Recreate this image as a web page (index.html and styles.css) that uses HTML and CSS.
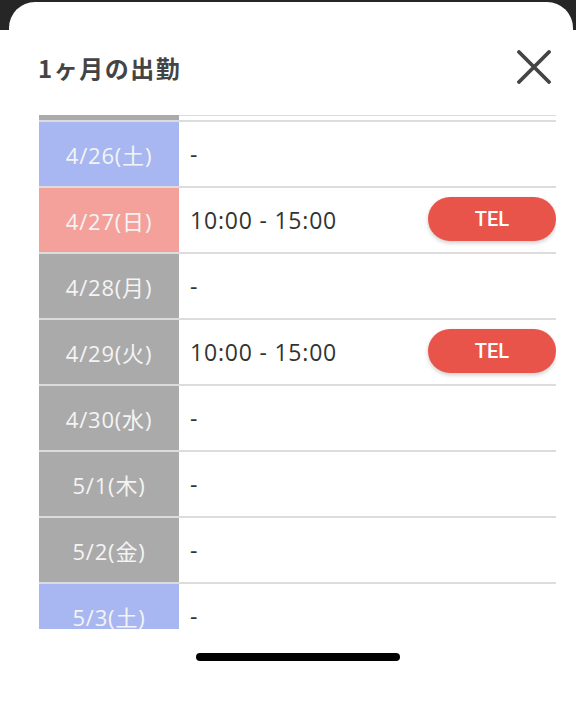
FILE: index.html
```html
<!DOCTYPE html>
<html lang="ja">
<head>
<meta charset="utf-8">
<link rel="stylesheet" href="styles.css">
</head>
<body>
<div class="sheet">
  <div class="header">
    <h1 class="title">1ヶ月の出勤</h1>
    <button class="close" aria-label="閉じる">
      <svg viewBox="0 0 34 34" width="34" height="34"><path d="M2 2 L32 32 M32 2 L2 32" stroke="#444" stroke-width="3.8" stroke-linecap="round" fill="none"/></svg>
    </button>
  </div>
  <div class="list">
    <div class="row partial"><div class="day gray"></div><div class="info top"></div></div>
    <div class="row"><div class="day sat">4/26(土)</div><div class="info">-</div></div>
    <div class="row"><div class="day sun">4/27(日)</div><div class="info">10:00 - 15:00<span class="tel">TEL</span></div></div>
    <div class="row"><div class="day gray">4/28(月)</div><div class="info">-</div></div>
    <div class="row"><div class="day gray">4/29(火)</div><div class="info">10:00 - 15:00<span class="tel">TEL</span></div></div>
    <div class="row"><div class="day gray">4/30(水)</div><div class="info">-</div></div>
    <div class="row"><div class="day gray">5/1(木)</div><div class="info">-</div></div>
    <div class="row"><div class="day gray">5/2(金)</div><div class="info">-</div></div>
    <div class="row"><div class="day sat">5/3(土)</div><div class="info">-</div></div>
  </div>
  <div class="home-area"><div class="home-bar"></div></div>
</div>
</body>
</html>
```
FILE: styles.css
```css
* { box-sizing: border-box; }
html, body { margin: 0; padding: 0; }
body {
  width: 576px;
  height: 705px;
  overflow: hidden;
  background: linear-gradient(#262626 0 30px, #ffffff 30px);
  font-family: "Noto Sans CJK JP", "Noto Sans", sans-serif;
}
.sheet {
  margin: 2px 3px 0 9px;
  height: 703px;
  background: #fff;
  border-radius: 26px 26px 0 0;
  display: flex;
  flex-direction: column;
}
.header {
  margin-top: 33px;
  height: 64px;
  padding: 0 22px 0 29px;
  display: flex;
  align-items: center;
  justify-content: space-between;
}
.title {
  margin: 0;
  font-size: 24px;
  font-weight: 700;
  color: #444;
  letter-spacing: 1.5px;
}
.close {
  border: 0;
  background: none;
  padding: 0;
  width: 34px;
  height: 34px;
  display: flex;
}
.list {
  margin: 16px 17px 0 30px;
  height: 514px;
  overflow: hidden;
  flex: none;
}
.row {
  display: flex;
  height: 66px;
  border-bottom: 2px solid #dcdcdc;
}
.row.partial { height: 7px; }
.day {
  width: 140px;
  flex: none;
  display: flex;
  align-items: center;
  justify-content: center;
  color: #f4f4f4;
  font-family: "Open Sans", "Noto Sans CJK JP", sans-serif;
  font-size: 22px;
  font-weight: 400;
  letter-spacing: 0.8px;
}
.gray { background: #aaaaaa; }
.sat { background: #a8b7f1; }
.sun { background: #f4a19b; }
.info {
  flex: 1;
  display: flex;
  align-items: center;
  justify-content: space-between;
  padding: 0 0 0 11px;
  font-family: "Open Sans", "Noto Sans CJK JP", sans-serif;
  font-size: 23px;
  letter-spacing: 0.8px;
  color: #333;
}
.info.top { border-top: 1px solid #dcdcdc; }
.tel {
  width: 128px;
  height: 44px;
  border-radius: 22px;
  background: #e8544a;
  color: #fff;
  font-family: Roboto, "Noto Sans", sans-serif;
  font-weight: 500;
  font-size: 20px;
  letter-spacing: 0;
  display: flex;
  align-items: center;
  justify-content: center;
  box-shadow: 0 2px 4px rgba(0,0,0,0.2);
  margin-bottom: 2px;
}
.home-area {
  height: 55px;
  display: flex;
  align-items: center;
  justify-content: center;
  padding-left: 14px;
}
.home-bar {
  width: 204px;
  height: 8px;
  border-radius: 4px;
  background: #000;
}
```
